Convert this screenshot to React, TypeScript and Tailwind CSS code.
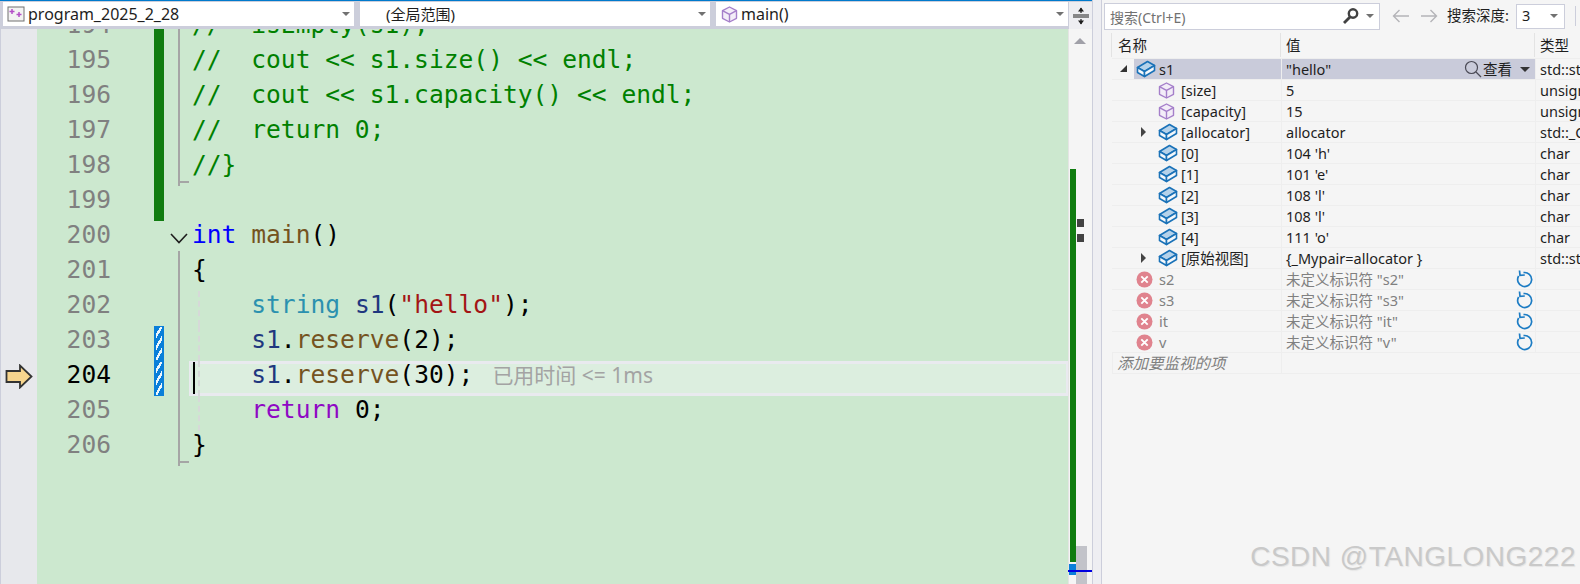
const mono = "font-['DejaVu_Sans_Mono','Liberation_Mono',monospace]";
const ui = "font-['Noto_Sans','Noto_Sans_CJK_SC',sans-serif]";

const C = "text-[#008000]"; // comment
const K = "text-[#0000ff]"; // keyword
const F = "text-[#74531f]"; // function
const T = "text-[#2b91af]"; // type
const V = "text-[#1f377f]"; // variable
const S = "text-[#a31515]"; // string literal
const R = "text-[#8f08c4]"; // control keyword
const P = "text-[#000000]"; // punctuation

type Token = [string, string];

interface CodeLine {
    no: number;
    tokens: Token[];
    change?: "green" | "blue";
    fold?: "line" | "end" | "open";
    guide?: boolean;
}

const lines: CodeLine[] = [
    { no: 194, tokens: [["//  isEmpty(s1);", C]], change: "green", fold: "line" },
    { no: 195, tokens: [["//  cout << s1.size() << endl;", C]], change: "green", fold: "line" },
    { no: 196, tokens: [["//  cout << s1.capacity() << endl;", C]], change: "green", fold: "line" },
    { no: 197, tokens: [["//  return 0;", C]], change: "green", fold: "line" },
    { no: 198, tokens: [["//}", C]], change: "green", fold: "end" },
    { no: 199, tokens: [], change: "green" },
    { no: 200, tokens: [["int", K], [" ", P], ["main", F], ["()", P]], fold: "open" },
    { no: 201, tokens: [["{", P]], fold: "line" },
    { no: 202, tokens: [["    ", P], ["string", T], [" ", P], ["s1", V], ["(", P], ['"hello"', S], [");", P]], fold: "line", guide: true },
    { no: 203, tokens: [["    ", P], ["s1", V], [".", P], ["reserve", F], ["(2);", P]], change: "blue", fold: "line", guide: true },
    { no: 204, tokens: [["    ", P], ["s1", V], [".", P], ["reserve", F], ["(30);", P]], change: "blue", fold: "line", guide: true },
    { no: 205, tokens: [["    ", P], ["return", R], [" 0;", P]], fold: "line", guide: true },
    { no: 206, tokens: [["}", P]], fold: "end" },
];

function BoxIcon() {
    return (
        <svg width="20" height="18" viewBox="0 0 20 18" className="shrink-0">
            <path d="M1.5 7.5 L11.5 1.5 L18.5 5.5 L8.5 11.5 Z" fill="#b5d2ea" stroke="#1a72b8" strokeWidth="1.6" strokeLinejoin="round" />
            <path d="M1.5 7.5 V12.5 L8.5 16.5 V11.5 Z" fill="#f5f8fb" stroke="#1a72b8" strokeWidth="1.6" strokeLinejoin="round" />
            <path d="M8.5 11.5 V16.5 L18.5 10.5 V5.5 Z" fill="#f5f8fb" stroke="#1a72b8" strokeWidth="1.6" strokeLinejoin="round" />
        </svg>
    );
}

function CubeIcon({ size = 17 }: { size?: number }) {
    return (
        <svg width={size} height={size} viewBox="0 0 17 17" className="shrink-0">
            <path d="M8.5 1 L15.5 4.7 V12.3 L8.5 16 L1.5 12.3 V4.7 Z" fill="#f3edf8" stroke="#a57fca" strokeWidth="1.4" strokeLinejoin="round" />
            <path d="M1.5 4.7 L8.5 8.4 L15.5 4.7 M8.5 8.4 V16" fill="none" stroke="#a57fca" strokeWidth="1.4" />
        </svg>
    );
}

function ErrorIcon() {
    return (
        <svg width="17" height="17" viewBox="0 0 17 17" className="shrink-0">
            <circle cx="8.5" cy="8.5" r="8" fill="#e0838e" />
            <path d="M5.3 5.3 L11.7 11.7 M11.7 5.3 L5.3 11.7" stroke="#ffffff" strokeWidth="1.9" />
        </svg>
    );
}

function RefreshIcon() {
    return (
        <svg width="18" height="18" viewBox="0 0 18 18" fill="none" stroke="#1c7cc4" strokeWidth="1.7" className="shrink-0">
            <path d="M7.5 2.6 A7 7 0 1 1 2.6 6" />
            <path d="M3.5 0.5 L4 5.4 L8.8 5" />
        </svg>
    );
}

function Caret() {
    return <span className="block w-0 h-0 border-x-[4px] border-x-transparent border-t-[4px] border-t-[#717171]" />;
}

function NavDropdown({ icon, text, className, textClass }: { icon?: React.ReactNode; text: string; className: string; textClass: string }) {
    return (
        <div className={`flex items-center bg-white h-[24px] pr-[4px] ${className}`}>
            {icon}
            <span className={`flex-1 leading-[24px] text-[#1e1e1e] ${textClass} ${ui}`}>{text}</span>
            <Caret />
        </div>
    );
}

function EditorRow({ line }: { line: CodeLine }) {
    const current = line.no === 204;
    return (
        <div className={`flex h-[35px] shrink-0 text-[24.6px] leading-[27px] whitespace-pre ${mono}`}>
            <div className={`w-[74px] text-right ${current ? "text-black" : "text-[#808080]"}`}>{line.no}</div>
            <div className="w-[43px]" />
            <div className="w-[10px]">
                {line.change === "green" && <div className="h-full bg-[#107c10]" />}
                {line.change === "blue" && (
                    <div className="h-full px-[2px] py-[1px] bg-[#0a7fd9]">
                        <div className="h-full bg-[repeating-linear-gradient(120deg,#0a7fd9_0px,#0a7fd9_3.5px,#eef6fc_3.5px,#eef6fc_5.85px)]" />
                    </div>
                )}
            </div>
            <div className="w-[14px]" />
            <div
                className={`relative w-[11px] ${line.fold === "line" || line.fold === "end" ? "border-l-2 border-[#a5a5a5]" : ""}`}
            >
                {line.fold === "end" && <div className="absolute left-0 bottom-[3px] w-[9px] h-[2px] bg-[#a5a5a5]" />}
                {line.fold === "open" && (
                    <>
                        <svg width="18" height="11" viewBox="0 0 18 11" fill="none" stroke="#1e1e1e" strokeWidth="1.6" className="absolute left-[-8px] top-[12px]">
                            <path d="M1 1 L9 9.5 L17 1" />
                        </svg>
                        <div className="absolute left-0 bottom-0 h-[5px] w-[2px] bg-[#a5a5a5]" />
                    </>
                )}
            </div>
            <div
                className={`relative flex-1 ${
                    current ? "border-y-[3px] border-x-[2px] border-[#e9eaef] bg-[#dceedf] leading-[21px] pl-[1px]" : "pl-[3px]"
                }`}
            >
                {line.guide && (
                    <div className={`absolute w-0 border-l-2 border-dashed border-[#d6d9d8] ${current ? "top-[-3px] bottom-[-3px] left-[7px]" : "top-0 bottom-0 left-[9px]"}`} />
                )}
                {current && <div className="absolute left-[2px] top-[-2px] bottom-[-1px] w-[2px] bg-black" />}
                {line.tokens.map(([text, color], i) => (
                    <span key={i} className={color}>
                        {text}
                    </span>
                ))}
                {current && (
                    <span className={`ml-[19px] text-[21px] text-[#a3a3a3] ${ui}`}>已用时间 &lt;= 1ms</span>
                )}
            </div>
        </div>
    );
}

function Editor() {
    return (
        <div className="flex flex-col w-[1092px] shrink-0 h-full">
            <div className="flex h-[27px] shrink-0 gap-[6px] bg-[#cccedb] pt-[1px] pl-[3px] border-t border-[#007acc] box-content">
                <NavDropdown
                    text="program_2025_2_28"
                    textClass="text-[16px]"
                    className="w-[351px]"
                    icon={
                        <svg width="18" height="16" viewBox="0 0 18 16" className="ml-[4px] mr-[3px] shrink-0">
                            <rect x="1" y="1" width="16" height="14" fill="#f3f3f3" stroke="#717171" />
                            <path d="M5 3 V8 M2.5 5.5 H7.5 M12 6 V11 M9.5 8.5 H14.5" stroke="#b44fc8" strokeWidth="1.5" />
                        </svg>
                    }
                />
                <NavDropdown text="(全局范围)" textClass="text-[15px]" className="w-[350px] pl-[26px]" />
                <NavDropdown
                    text="main()"
                    textClass="text-[16px]"
                    className="w-[352px]"
                    icon={
                        <span className="ml-[5px] mr-[3px]">
                            <CubeIcon />
                        </span>
                    }
                />
                <div className="flex w-[23px] items-center justify-center bg-[#eeeef2] ml-[-5px]">
                    <svg width="16" height="18" viewBox="0 0 16 18">
                        <path d="M0 8 H16 M0 10 H16" stroke="#1e1e1e" strokeWidth="1.2" />
                        <path d="M8 1 V6 M8 12 V17" stroke="#1e1e1e" strokeWidth="1.2" />
                        <path d="M5 4.5 L8 0.5 L11 4.5 Z M5 13.5 L8 17.5 L11 13.5 Z" fill="#1e1e1e" />
                    </svg>
                </div>
            </div>
            <div className="flex flex-1 min-h-0 overflow-hidden">
                <div className="w-[37px] shrink-0 bg-[#e7e8ec] border-l border-[#cccedb] pl-[4px] pt-[335px]">
                    <svg width="28" height="25" viewBox="0 0 28 25">
                        <path d="M1.5 7 H15 V1.5 L26.5 12.5 L15 23.5 V18 H1.5 Z" fill="#f7d58e" stroke="#333333" strokeWidth="1.8" strokeLinejoin="miter" />
                    </svg>
                </div>
                <div className="flex flex-col flex-1 min-w-0 bg-[#cce8cf]">
                    <div className="mt-[-18px]">
                        {lines.map((line) => (
                            <EditorRow key={line.no} line={line} />
                        ))}
                    </div>
                </div>
                <div className="relative w-[24px] shrink-0 bg-[#f5f5f5] border-l border-[#e4e4e4]">
                    <div className="absolute left-[5px] top-[9px] w-0 h-0 border-x-[6px] border-x-transparent border-b-[6px] border-b-[#a0a0a8]" />
                    <div className="absolute left-[1px] top-[140px] h-[393px] w-[6px] bg-[#107c10]" />
                    <div className="absolute left-[8px] top-[190px] w-[7px] h-[8px] bg-[#424242]" />
                    <div className="absolute left-[8px] top-[205px] w-[7px] h-[8px] bg-[#424242]" />
                    <div className="absolute left-[7px] top-[517px] bottom-0 w-[11px] bg-[#c2c3c9]" />
                    <div className="absolute left-[0px] top-[535px] w-[7px] h-[11px] bg-[#0a7fd9]" />
                    <div className="absolute left-[-1px] right-0 top-[541px] h-[2px] bg-[#0000e0]" />
                </div>
            </div>
        </div>
    );
}

interface WatchRow {
    name: string;
    value: string;
    type?: string;
    icon: "box" | "cube" | "error";
    depth: 0 | 1;
    arrow?: "open" | "closed";
    selected?: boolean;
}

const watchRows: WatchRow[] = [
    { name: "s1", value: '"hello"', type: "std::string", icon: "box", depth: 0, arrow: "open", selected: true },
    { name: "[size]", value: "5", type: "unsigned", icon: "cube", depth: 1 },
    { name: "[capacity]", value: "15", type: "unsigned", icon: "cube", depth: 1 },
    { name: "[allocator]", value: "allocator", type: "std::_Compressed", icon: "box", depth: 1, arrow: "closed" },
    { name: "[0]", value: "104 'h'", type: "char", icon: "box", depth: 1 },
    { name: "[1]", value: "101 'e'", type: "char", icon: "box", depth: 1 },
    { name: "[2]", value: "108 'l'", type: "char", icon: "box", depth: 1 },
    { name: "[3]", value: "108 'l'", type: "char", icon: "box", depth: 1 },
    { name: "[4]", value: "111 'o'", type: "char", icon: "box", depth: 1 },
    { name: "[原始视图]", value: "{_Mypair=allocator }", type: "std::string", icon: "box", depth: 1, arrow: "closed" },
    { name: "s2", value: '未定义标识符 "s2"', icon: "error", depth: 0 },
    { name: "s3", value: '未定义标识符 "s3"', icon: "error", depth: 0 },
    { name: "it", value: '未定义标识符 "it"', icon: "error", depth: 0 },
    { name: "v", value: '未定义标识符 "v"', icon: "error", depth: 0 },
];

function Row({ row }: { row: WatchRow }) {
    const error = row.icon === "error";
    const textColor = error ? "text-[#808080]" : "text-[#1e1e1e]";
    const cube = row.icon === "cube";
    return (
        <div className="flex h-[21px] shrink-0 border-b border-[#eeeeee] leading-[20px]">
            <div className="flex w-[169px] shrink-0 items-center">
                <div className="w-[22px] shrink-0" />
                {row.depth === 1 && <div className="w-[22px] shrink-0 relative">
                    {row.arrow === "closed" && (
                        <span className="absolute left-[7px] top-[-5px] block w-0 h-0 border-y-[5px] border-y-transparent border-l-[5px] border-l-[#444444]" />
                    )}
                </div>}
                <div className={`relative flex flex-1 items-center h-[20px] ${row.selected ? "bg-[#c9cbda]" : ""}`}>
                    {row.arrow === "open" && (
                        <span className="absolute left-[-14px] top-[6px] block w-0 h-0 border-l-[7px] border-l-transparent border-b-[7px] border-b-[#333333]" />
                    )}
                    <span className="flex w-[25px] shrink-0 pl-[2px]">
                        {row.icon === "box" && <BoxIcon />}
                        {cube && <CubeIcon />}
                        {error && <ErrorIcon />}
                    </span>
                    <span className={textColor}>{row.name}</span>
                </div>
            </div>
            <div
                className={`flex items-center w-[254px] shrink-0 border-l border-[#eeeeee] pl-[4px] h-[20px] ${
                    row.selected ? "bg-[#c9cbda] pr-[5px]" : "pr-[1px]"
                }`}
            >
                <span className={`flex-1 ${textColor}`}>{row.value}</span>
                {row.selected && (
                    <span className="flex items-center gap-[1px] text-[#1e1e1e]">
                        <svg width="18" height="18" viewBox="0 0 18 18" fill="none" stroke="#4a4a55" strokeWidth="1.2">
                            <circle cx="7.5" cy="7.5" r="6" />
                            <path d="M12 12 L17 17" />
                        </svg>
                        查看
                        <span className="ml-[7px] block w-0 h-0 border-x-[5px] border-x-transparent border-t-[5px] border-t-[#333333]" />
                    </span>
                )}
                {error && <RefreshIcon />}
            </div>
            <div className="flex-1 min-w-0 overflow-hidden whitespace-nowrap border-l border-[#eeeeee] pl-[4px] h-[20px] text-[#1e1e1e]">
                {row.type}
            </div>
        </div>
    );
}

function WatchPanel() {
    return (
        <div className={`flex flex-col flex-1 min-w-0 bg-[#f5f5f5] text-[14.5px] overflow-hidden ${ui}`}>
            <div className="flex items-center h-[33px] shrink-0 pl-[2px] pb-[1px]">
                <div className="flex items-center w-[276px] h-[27px] bg-white border border-[#cccedb] pl-[5px] pr-[5px]">
                    <span className="flex-1 text-[14px] text-[#717171] pt-[2px]">搜索(Ctrl+E)</span>
                    <svg width="18" height="18" viewBox="0 0 18 18" fill="none" stroke="#424242">
                        <circle cx="11" cy="6.5" r="4.2" strokeWidth="2.4" />
                        <path d="M8 10 L2 16" strokeWidth="2.8" />
                    </svg>
                    <span className="ml-[6px]">
                        <Caret />
                    </span>
                </div>
                <svg width="18" height="14" viewBox="0 0 18 14" fill="none" stroke="#b4b4b8" strokeWidth="1.4" className="ml-[12px]">
                    <path d="M17 7 H1.5 M7.5 1 L1.5 7 L7.5 13" />
                </svg>
                <svg width="18" height="14" viewBox="0 0 18 14" fill="none" stroke="#b4b4b8" strokeWidth="1.4" className="ml-[10px]">
                    <path d="M1 7 H16.5 M10.5 1 L16.5 7 L10.5 13" />
                </svg>
                <span className="ml-[9px] w-[69px] text-[#1e1e1e] whitespace-nowrap">搜索深度:</span>
                <div className="flex items-center w-[49px] h-[25px] bg-white border border-[#cccedb] pl-[5px] pr-[6px]">
                    <span className="flex-1 text-[#1e1e1e]">3</span>
                    <Caret />
                </div>
                <div className="ml-[10px] w-[1px] h-[20px] bg-[#cccedb]" />
            </div>
            <div className="flex h-[24px] shrink-0 leading-[24px] text-[#1e1e1e]">
                <div className="w-[10px] shrink-0 border-r border-[#e3e3e3]" />
                <div className="w-[169px] shrink-0 pl-[6px] border-r border-[#e3e3e3]">名称</div>
                <div className="w-[254px] shrink-0 pl-[5px] border-r border-[#e3e3e3]">值</div>
                <div className="pl-[5px]">类型</div>
            </div>
            <div className="ml-[10px] mt-[1px] flex flex-col border-t border-[#eeeeee]">
                {watchRows.map((row) => (
                    <Row key={row.name} row={row} />
                ))}
                <div className="flex h-[21px] border-b border-l border-[#eeeeee] leading-[20px] text-[#808080] italic">
                    <div className="w-[168px] pl-[4px] text-[15.5px]">添加要监视的项</div>
                    <div className="border-l border-[#eeeeee]" />
                </div>
            </div>
        </div>
    );
}

export default function App() {
    return (
        <div className="relative flex h-[584px] w-[1580px] overflow-hidden bg-[#f5f5f5]">
            <Editor />
            <div className="w-[10px] shrink-0 bg-[#eeeef2] border-x border-[#cccedb]" />
            <WatchPanel />
            <div className="absolute right-[4px] top-[539px] text-[28px] leading-[36px] tracking-[0.5px] text-[#c9c9c9] whitespace-nowrap font-['Liberation_Sans',sans-serif] [text-shadow:1px_1px_1px_#e4e4e4]">
                CSDN @TANGLONG222
            </div>
        </div>
    );
}
